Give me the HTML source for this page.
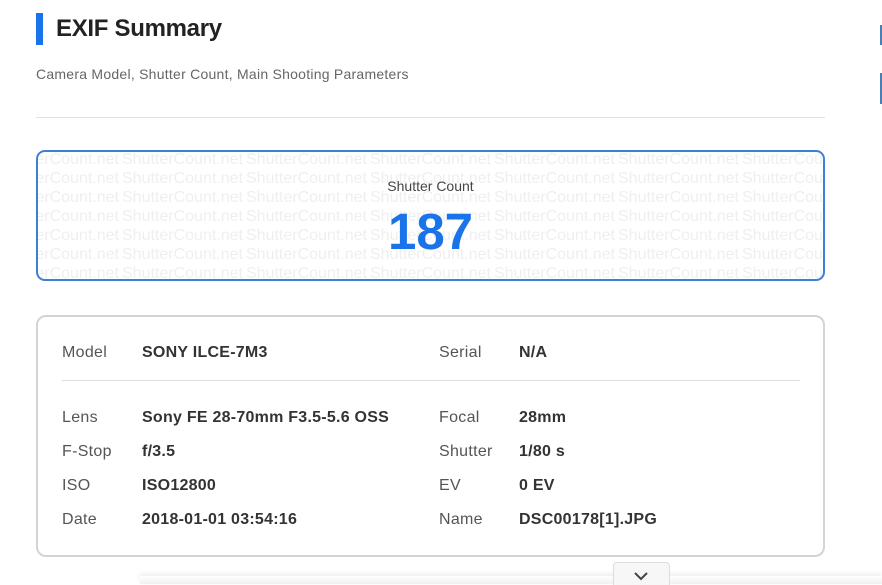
<!DOCTYPE html>
<html><head><meta charset="utf-8"><style>
*{margin:0;padding:0;box-sizing:border-box}
body{width:882px;height:584px;overflow:hidden;background:#fff;font-family:"Liberation Sans",sans-serif;position:relative;color:#333}
.a{position:absolute}
.wm{position:absolute;left:38px;top:152px;width:785px;height:127px;overflow:hidden;border-radius:7px}
.wm div{position:absolute;left:-40px;white-space:nowrap;font-size:16px;color:#efefef;letter-spacing:0px}
.wm span{display:inline-block;width:124px;overflow:hidden}
.lab{position:absolute;font-size:16px;color:#555;letter-spacing:0.3px}
.val{position:absolute;font-size:16px;font-weight:bold;color:#333;letter-spacing:0.25px}
</style></head><body>
<div class="a" style="left:36px;top:13px;width:7px;height:32px;background:#1a73e8"></div>
<div class="a" style="left:56px;top:15px;font-size:24px;font-weight:bold;color:#222;letter-spacing:-0.3px">EXIF Summary</div>
<div class="a" style="left:36px;top:66px;font-size:14px;color:#666;letter-spacing:0.25px">Camera Model, Shutter Count, Main Shooting Parameters</div>
<div class="a" style="left:36px;top:117px;width:789px;height:1px;background:#e2e2e2"></div>
<div class="a" style="left:880px;top:25px;width:2px;height:20px;background:#4a7fb5"></div>
<div class="a" style="left:880px;top:73px;width:2px;height:31px;background:#4a7fb5"></div>

<div class="wm">
<div style="top:-1px"><span>ShutterCount.net</span><span>ShutterCount.net</span><span>ShutterCount.net</span><span>ShutterCount.net</span><span>ShutterCount.net</span><span>ShutterCount.net</span><span>ShutterCount.net</span><span>ShutterCount.net</span></div>
<div style="top:18px"><span>ShutterCount.net</span><span>ShutterCount.net</span><span>ShutterCount.net</span><span>ShutterCount.net</span><span>ShutterCount.net</span><span>ShutterCount.net</span><span>ShutterCount.net</span><span>ShutterCount.net</span></div>
<div style="top:37px"><span>ShutterCount.net</span><span>ShutterCount.net</span><span>ShutterCount.net</span><span>ShutterCount.net</span><span>ShutterCount.net</span><span>ShutterCount.net</span><span>ShutterCount.net</span><span>ShutterCount.net</span></div>
<div style="top:56px"><span>ShutterCount.net</span><span>ShutterCount.net</span><span>ShutterCount.net</span><span>ShutterCount.net</span><span>ShutterCount.net</span><span>ShutterCount.net</span><span>ShutterCount.net</span><span>ShutterCount.net</span></div>
<div style="top:75px"><span>ShutterCount.net</span><span>ShutterCount.net</span><span>ShutterCount.net</span><span>ShutterCount.net</span><span>ShutterCount.net</span><span>ShutterCount.net</span><span>ShutterCount.net</span><span>ShutterCount.net</span></div>
<div style="top:94px"><span>ShutterCount.net</span><span>ShutterCount.net</span><span>ShutterCount.net</span><span>ShutterCount.net</span><span>ShutterCount.net</span><span>ShutterCount.net</span><span>ShutterCount.net</span><span>ShutterCount.net</span></div>
<div style="top:113px"><span>ShutterCount.net</span><span>ShutterCount.net</span><span>ShutterCount.net</span><span>ShutterCount.net</span><span>ShutterCount.net</span><span>ShutterCount.net</span><span>ShutterCount.net</span><span>ShutterCount.net</span></div>
</div>
<div class="a" style="left:36px;top:150px;width:789px;height:131px;border:2px solid #3b82d6;border-radius:9px"></div>
<div class="a" style="left:36px;top:178px;width:789px;text-align:center;font-size:14px;color:#444">Shutter Count</div>
<div class="a" style="left:36px;top:203px;width:789px;text-align:center;font-size:51px;font-weight:bold;color:#1a73e8;line-height:58px">187</div>

<div class="a" style="left:36px;top:315px;width:789px;height:242px;border:2px solid #d4d4d4;border-radius:10px"></div>
<div class="a" style="left:62px;top:380px;width:738px;height:1px;background:#ddd"></div>

<div class="lab" style="left:62px;top:344px">Model</div><div class="val" style="left:142px;top:344px">SONY ILCE-7M3</div>
<div class="lab" style="left:439px;top:344px">Serial</div><div class="val" style="left:519px;top:344px">N/A</div>
<div class="lab" style="left:62px;top:409px">Lens</div><div class="val" style="left:142px;top:409px">Sony FE 28-70mm F3.5-5.6 OSS</div>
<div class="lab" style="left:439px;top:409px">Focal</div><div class="val" style="left:519px;top:409px">28mm</div>
<div class="lab" style="left:62px;top:443px">F-Stop</div><div class="val" style="left:142px;top:443px">f/3.5</div>
<div class="lab" style="left:439px;top:443px">Shutter</div><div class="val" style="left:519px;top:443px">1/80 s</div>
<div class="lab" style="left:62px;top:477px">ISO</div><div class="val" style="left:142px;top:477px">ISO12800</div>
<div class="lab" style="left:439px;top:477px">EV</div><div class="val" style="left:519px;top:477px">0 EV</div>
<div class="lab" style="left:62px;top:511px">Date</div><div class="val" style="left:142px;top:511px">2018-01-01 03:54:16</div>
<div class="lab" style="left:439px;top:511px">Name</div><div class="val" style="left:519px;top:511px">DSC00178[1].JPG</div>

<div class="a" style="left:140px;top:576px;width:742px;height:8px;background:linear-gradient(#fff,#f0f0f0);box-shadow:0 -2px 6px rgba(0,0,0,0.08)"></div>
<div class="a" style="left:613px;top:562px;width:57px;height:23px;background:#f7f7f7;border:1px solid #ddd;border-bottom:none;border-radius:4px 4px 0 0"></div>
<svg class="a" style="left:633px;top:571px" width="16" height="10" viewBox="0 0 16 10"><path d="M2 2 L8 8 L14 2" fill="none" stroke="#444" stroke-width="2"/></svg>
</body></html>
